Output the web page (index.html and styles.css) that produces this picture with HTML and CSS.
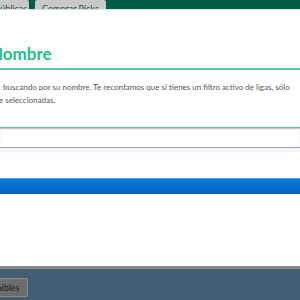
FILE: index.html
```html
<!DOCTYPE html>
<html lang="es">

<head>
  <meta charset="UTF-8">
  <meta name="viewport" content="width=device-width, initial-scale=1.0">
  <title>Buscar jugador</title>
  <link rel="stylesheet" href="styles.css">
</head>

<body>
  <!-- barra superior con pestañas -->
  <div class="topbar">
    <div class="tab tab-first">Ligas públicas</div>
    <div class="tab">Comprar Picks</div>
  </div>

  <!-- modal de búsqueda -->
  <div class="modal">
    <h2 class="modal-title">Nombre</h2>
    <p class="modal-text">
      <span class="line line-first">buscando por su nombre. Te recordamos que si tienes un filtro activo de ligas, sólo</span>
      <span class="line line-second">e seleccionadas.</span>
    </p>
    <input type="text" class="search-input">
    <button type="button" class="search-btn"></button>
  </div>

  <!-- barra inferior -->
  <div class="footer">
    <button type="button" class="footer-btn">Disponibles</button>
  </div>
</body>

</html>
```

FILE: styles.css
```css
* {
  box-sizing: border-box;
}

html,
body {
  margin: 0;
  height: 300px;
  overflow: hidden;
}

body {
  font-family: Lato, "Open Sans", sans-serif;
  background: #435d73;
  display: flex;
  flex-direction: column;
}

.topbar {
  height: 10px;
  background: #005c46;
  display: flex;
  gap: 6px;
  overflow: hidden;
  border-bottom: 1px solid #cfe8df;
}

.tab {
  background: #c9c9c9;
  color: #3c3c3c;
  font-size: 9px;
  line-height: 9px;
  padding: 4px 7px 0;
  white-space: nowrap;
  border-radius: 2px 2px 0 0;
}

.tab-first {
  width: 29px;
  padding: 4px 0 0;
  text-indent: -27px;
  border-radius: 0 2px 0 0;
}

.modal {
  height: 256px;
  background: white;
  padding-top: 34px;
}

.modal-title {
  margin: 0 0 0 -10px;
  font-size: 17px;
  font-weight: 700;
  line-height: 20px;
  color: #22bf8d;
  padding-bottom: 4px;
  border-bottom: 2px solid #5ccaa8;
}

.modal-text {
  margin: 11px 0 0;
  font-size: 8px;
  line-height: 13px;
  color: #555;
}

.line {
  display: block;
  white-space: nowrap;
}

.line-first {
  padding-left: 3px;
}

.line-second {
  margin-left: -1px;
}

.search-input {
  display: block;
  width: 100%;
  height: 21px;
  margin: 20px 0 0;
  border: 1px solid #50cda6;
  border-left: none;
  border-right: none;
  box-shadow: inset 0 1px 1px rgba(0, 0, 0, 0.25), 0 0 2px rgba(80, 205, 166, 0.5);
}

.search-btn {
  display: block;
  width: 100%;
  height: 16px;
  margin-top: 30px;
  border: none;
  border-top: 1px solid #4a9ce6;
  border-bottom: 1px solid #0058ad;
  background: linear-gradient(#0a7ad9, #0064c2);
}

.footer {
  flex: 1;
  border-top: 3px solid #8a8a8a;
  padding-top: 9px;
}

.footer-btn {
  display: block;
  width: 28px;
  height: 19px;
  margin: 0;
  padding: 0;
  background: #6c6c6c;
  border: 1px solid #8c8c8c;
  border-left: none;
  border-radius: 0 2px 2px 0;
  color: #1e1e1e;
  font-family: Lato, sans-serif;
  font-size: 9px;
  text-indent: -34px;
  overflow: hidden;
  white-space: nowrap;
}
```
